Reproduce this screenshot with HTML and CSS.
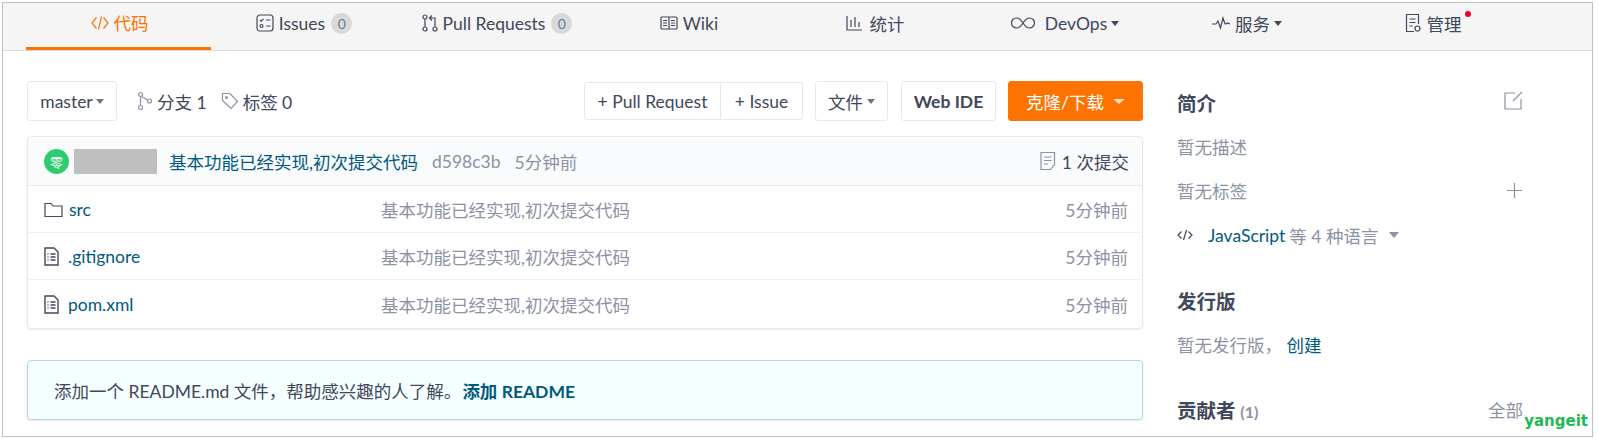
FILE: index.html
```html
<!DOCTYPE html>
<html lang="zh-CN">
<head>
<meta charset="utf-8">
<title>Repository</title>
<link rel="stylesheet" href="styles.css">
</head>
<body>
<div class="frame">
  <nav class="tabs">
    <a class="tab active"><svg class="ic" width="18" height="18" viewBox="0 0 18 18"><path d="M5.500 3.500 1 9l4.500 5.500M12.500 3.500 17 9l-4.500 5.500M10.500 2.500l-3 13"/></svg>代码</a>
    <a class="tab"><svg class="ic" width="18" height="18" viewBox="0 0 18 18"><rect x="1" y="1" width="16" height="16" rx="3"/><path d="M4 6l1.200 1.200L7.500 4.800M10 6h4.500M10 12h4.500"/><circle cx="5.500" cy="12" r="1.500"/></svg>Issues<span class="badge">0</span></a>
    <a class="tab"><svg class="ic" width="16" height="18" viewBox="0 0 16 18"><circle cx="3" cy="3" r="2"/><circle cx="3" cy="15" r="2"/><circle cx="13" cy="15" r="2"/><path d="M3 5v8M13 13V4H8M10 1.500 7.500 4 10 6.500"/></svg>Pull Requests<span class="badge">0</span></a>
    <a class="tab"><svg class="ic" width="18" height="16" viewBox="0 0 18 16"><rect x="1" y="2" width="16" height="12" rx="1"/><path d="M9 2v12M3 5.500h4M3 8h4M3 10.500h4M11 5.500h4M11 8h4M11 10.500h4"/></svg>Wiki</a>
    <a class="tab"><svg class="ic chart" width="16" height="18" viewBox="0 0 16 18"><path d="M1 2v14h15M5 6v7M9 3v10M13 8v5"/></svg>统计</a>
    <a class="tab"><svg class="ic wide" width="24" height="14" viewBox="0 0 24 14"><path d="M12 7C9.500 3 7.500 2 5.500 2a5 5 0 0 0 0 10c2 0 4-1 6.500-5s4.500-5 6.500-5a5 5 0 0 1 0 10c-2 0-4-1-6.500-5z"/></svg>DevOps<i class="caret"></i></a>
    <a class="tab"><svg class="ic" width="18" height="14" viewBox="0 0 18 14"><path d="M0 8h4l2-3 2.500 7L11 2l2 6h1l1-1 3 1"/></svg>服务<i class="caret"></i></a>
    <a class="tab"><svg class="ic" width="17" height="20" viewBox="0 0 17 20"><path d="M9 18.500H1.500v-17h12V11M4.500 6h6M4.500 9.500h6M4.500 13h3"/><circle cx="12.500" cy="15.500" r="2.500"/></svg><span class="dotted">管理<i class="dot"></i></span></a>
  </nav>

  <div class="body">
    <main class="left">
      <div class="toolbar">
        <button class="btn master">master<i class="caret gray-s"></i></button>
        <span class="stat first"><svg class="ic" width="16" height="20" viewBox="0 0 16 20"><circle cx="3.500" cy="3.500" r="2"/><circle cx="3.500" cy="16.500" r="2"/><circle cx="12.500" cy="10" r="2"/><path d="M3.500 5.500v9M4.500 5.500 10.700 9"/></svg>分支 1</span>
        <span class="stat"><svg class="ic" width="18" height="18" viewBox="0 0 18 18"><path d="M1.500 1.500h7.500l7.500 8-6.500 7-8.500-8z"/><circle cx="5.500" cy="5.500" r="1"/></svg>标签 0</span>
        <span class="grow"></span>
        <div class="group">
          <button class="btn seg">+ Pull Request</button>
          <button class="btn seg">+ Issue</button>
        </div>
        <button class="btn file">文件<i class="caret gray-s"></i></button>
        <button class="btn ide">Web IDE</button>
        <button class="btn clone">克隆/下载<i class="caret light"></i></button>
      </div>

      <section class="files">
        <header class="commit">
          <span class="avatar">零</span>
          <span class="redact"></span>
          <a class="link msg">基本功能已经实现,初次提交代码</a>
          <span class="muted sha">d598c3b</span>
          <span class="muted">5分钟前</span>
          <span class="grow"></span>
          <svg class="ic soft" width="16" height="20" viewBox="0 0 16 20"><path d="M1 1.500h13.500v12L10.500 18.500H1zM4 6h7.500M4 9.500h7.500M4 13h4"/></svg>
          <span class="count">1 次提交</span>
        </header>
        <div class="row">
          <span class="name"><svg class="ic dark" width="19" height="16" viewBox="0 0 19 16"><path d="M1 14.500V1.500h6l2 2.500h9v10.500z"/></svg><a class="link">src</a></span>
          <span class="muted rowmsg">基本功能已经实现,初次提交代码</span>
          <span class="muted time">5分钟前</span>
        </div>
        <div class="row">
          <span class="name"><svg class="ic dark doc" width="15" height="19" viewBox="0 0 15 19"><path d="M1 1h9l4 4v13H1zM6.500 7h5M6.500 10h5M6.500 13h5M3.500 7h1M3.500 10h1M3.500 13h1"/></svg><a class="link">.gitignore</a></span>
          <span class="muted rowmsg">基本功能已经实现,初次提交代码</span>
          <span class="muted time">5分钟前</span>
        </div>
        <div class="row">
          <span class="name"><svg class="ic dark doc" width="15" height="19" viewBox="0 0 15 19"><path d="M1 1h9l4 4v13H1zM6.500 7h5M6.500 10h5M6.500 13h5M3.500 7h1M3.500 10h1M3.500 13h1"/></svg><a class="link">pom.xml</a></span>
          <span class="muted rowmsg">基本功能已经实现,初次提交代码</span>
          <span class="muted time">5分钟前</span>
        </div>
      </section>

      <div class="readme">添加一个 README.md 文件，帮助感兴趣的人了解。<a class="add">添加 README</a></div>
    </main>

    <aside class="side">
      <div class="title-row intro">
        <h3>简介</h3>
        <svg class="ic soft edit" width="19" height="19" viewBox="0 0 19 19"><path d="M11 2H1v16h16V8M9 10l9-9"/></svg>
      </div>
      <p class="muted line desc">暂无描述</p>
      <div class="title-row line tags">
        <span class="muted">暂无标签</span>
        <svg class="ic soft plus" width="17" height="17" viewBox="0 0 17 17"><path d="M8.500 1v15M1 8.500h15"/></svg>
      </div>
      <div class="langs">
        <svg class="ic" width="16" height="12" viewBox="0 0 16 12"><path d="M4.500 2.500 1 6l3.500 3.500M11.500 2.500 15 6l-3.500 3.500M9.500 1l-3 10"/></svg>
        <a class="link">JavaScript</a><span class="muted">等 4 种语言</span><i class="caret gray"></i>
      </div>
      <h3 class="release">发行版</h3>
      <p class="muted line rel-text">暂无发行版， <a class="link">创建</a></p>
      <div class="title-row contrib">
        <h3>贡献者 <span class="num">(1)</span></h3>
        <span class="muted all">全部</span>
      </div>
    </aside>
  </div>
  <span class="mark">yangeit</span>
</div>
</body>
</html>
```

FILE: styles.css
```css
* { box-sizing: border-box; }
html, body { margin: 0; padding: 0; background: #fff; overflow: hidden; }
body {
  font-family: "Lato", "Noto Sans CJK SC", sans-serif;
  font-size: 17.500px;
  color: #40485b;
}
a { color: inherit; text-decoration: none; }
p, h3 { margin: 0; }
svg { flex: none; }

.frame {
  position: relative;
  width: 1591px;
  height: 435px;
  margin: 2px 0 0 2px;
  border: 1px solid #bfbfbf;
  overflow: hidden;
}

.ic { fill: none; stroke: #40485b; stroke-width: 1.200; }
.ic.soft { stroke: #8c92a4; }
.ic.dark { stroke: #40485b; }

.tabs {
  display: grid;
  grid-template-columns: 185px 186px 200px 184px 188px 192px 172px 200px;
  height: 48px;
  padding-left: 24px;
  background: #f5f5f5;
  border-bottom: 1px solid #d9d9d9;
  margin-left: -1px;
  margin-right: -1px;
}
.tab {
  display: flex;
  align-items: center;
  justify-content: center;
  gap: 5px;
  height: 47px;
  padding-bottom: 7px;
}
.tab .ic.wide { margin-right: 5px; }
.tab .ic.chart { margin-right: 3px; }
.tab.active {
  color: #fe7300;
  border-bottom: 3px solid #fe7300;
  padding-bottom: 5px;
  padding-left: 2px;
}
.tab.active .ic { stroke: #fe7300; }
.badge {
  display: inline-flex;
  align-items: center;
  justify-content: center;
  width: 21px;
  height: 21px;
  margin-left: 1px;
  border-radius: 50%;
  background: #d9d9d9;
  color: #6a7a9b;
  font-size: 14px;
}
.caret {
  display: inline-block;
  width: 0;
  height: 0;
  margin-left: -1px;
  border-style: solid;
  border-width: 5px 4.500px 0;
  border-color: #40485b transparent transparent;
}
.caret.gray-s { border-color: #6d7385 transparent transparent; }
.caret.light { border-color: #ffd9b8 transparent transparent; border-width: 5px 6px 0; margin-left: 9px; }
.caret.gray { border-color: #8c92a4 transparent transparent; border-width: 6px 5.500px 0; margin-left: 0; }
.dotted { position: relative; }
.dot {
  position: absolute;
  top: 0;
  right: -9px;
  width: 6px;
  height: 6px;
  border-radius: 50%;
  background: #f0002d;
}

.body { display: flex; padding-left: 24px; }
.left { width: 1116px; }
.side { width: 346px; margin-left: 34px; padding-top: 31px; }

.toolbar { display: flex; align-items: center; height: 40px; margin-top: 30px; }
.grow { flex: 1; }
.btn {
  display: inline-flex;
  align-items: center;
  justify-content: center;
  gap: 5px;
  height: 40px;
  padding: 0;
  background: #fff;
  border: 1px solid #e3e9ed;
  border-radius: 3px;
  color: #40485b;
  font: inherit;
}
.master { width: 90px; gap: 4px; }
.stat { display: inline-flex; align-items: center; gap: 4px; margin-left: 14px; }
.stat.first { margin-left: 20px; }
.stat .ic { stroke: #8c92a4; }
.group { display: flex; height: 38px; }
.seg { height: 38px; border-radius: 0; }
.seg:first-child { width: 137px; border-radius: 3px 0 0 3px; }
.seg:last-child { width: 82px; border-left: 0; border-radius: 0 3px 3px 0; }
.file { width: 73px; margin-left: 12px; }
.ide { width: 95px; margin-left: 13px; font-weight: 700; }
.clone {
  width: 135px;
  margin-left: 12px;
  background: #fe7300;
  border-color: #fe7300;
  color: #fff;
  gap: 0;
}

.files {
  margin-top: 15px;
  border: 1px solid #e3e9ed;
  border-radius: 4px;
  box-shadow: 0 1px 2px rgba(34, 36, 38, .08);
}
.commit {
  display: flex;
  align-items: center;
  height: 49px;
  padding: 0 13px 0 16px;
  background: #fafbfc;
  border-bottom: 1px solid #e3e9ed;
  border-radius: 4px 4px 0 0;
}
.avatar {
  display: flex;
  align-items: center;
  justify-content: center;
  width: 25px;
  height: 25px;
  border-radius: 50%;
  background: #2ecc71;
  color: #fff;
  font-size: 13px;
}
.redact { width: 83px; height: 25px; margin-left: 5px; background: #bfbfbf; }
.link { color: #005980; }
.msg { margin-left: 12px; }
.sha { margin: 0 14px; }
.muted { color: #8c92a4; }
.count { margin-left: 6px; }
.row {
  display: grid;
  grid-template-columns: 337px 1fr auto;
  align-items: center;
  height: 47px;
  padding: 1px 14px 0 16px;
  border-bottom: 1px solid #eef2f5;
}
.row:last-child { border-bottom: 0; height: 48px; }
.name { display: flex; align-items: center; gap: 6px; }
.doc { margin-right: 3px; stroke-width: 1.400; }

.readme {
  display: flex;
  align-items: center;
  height: 60px;
  margin-top: 31px;
  padding-left: 26px;
  background: #f5ffff;
  border: 1px solid #b4d8e6;
  border-radius: 4px;
  box-shadow: 0 1px 2px rgba(34, 36, 38, .1);
  color: #40485b;
}
.add { margin-left: 1px; color: #005980; font-weight: 700; }

h3 { font-size: 19.500px; font-weight: 700; color: #40485b; }
.title-row { display: flex; align-items: center; justify-content: space-between; }
.intro { height: 40px; }
.edit { margin-top: -4px; }
.desc { margin-top: 14px; line-height: 24px; }
.tags { margin-top: 18px; height: 24px; }
.langs { display: flex; align-items: center; gap: 15px; height: 24px; margin-top: 21px; }
.langs .muted { margin-left: -11px; margin-right: -4px; }
.release { margin-top: 40px; line-height: 30px; }
.rel-text { margin-top: 17px; line-height: 24px; }
.contrib { margin-top: 36px; height: 30px; }
.num { font-size: 16px; color: #8c92a4; }

.mark {
  position: absolute;
  right: 4px;
  bottom: 6px;
  color: #1db954;
  font-size: 15px;
  font-weight: 700;
  line-height: 18px;
  font-family: "DejaVu Sans", sans-serif;
}
```
